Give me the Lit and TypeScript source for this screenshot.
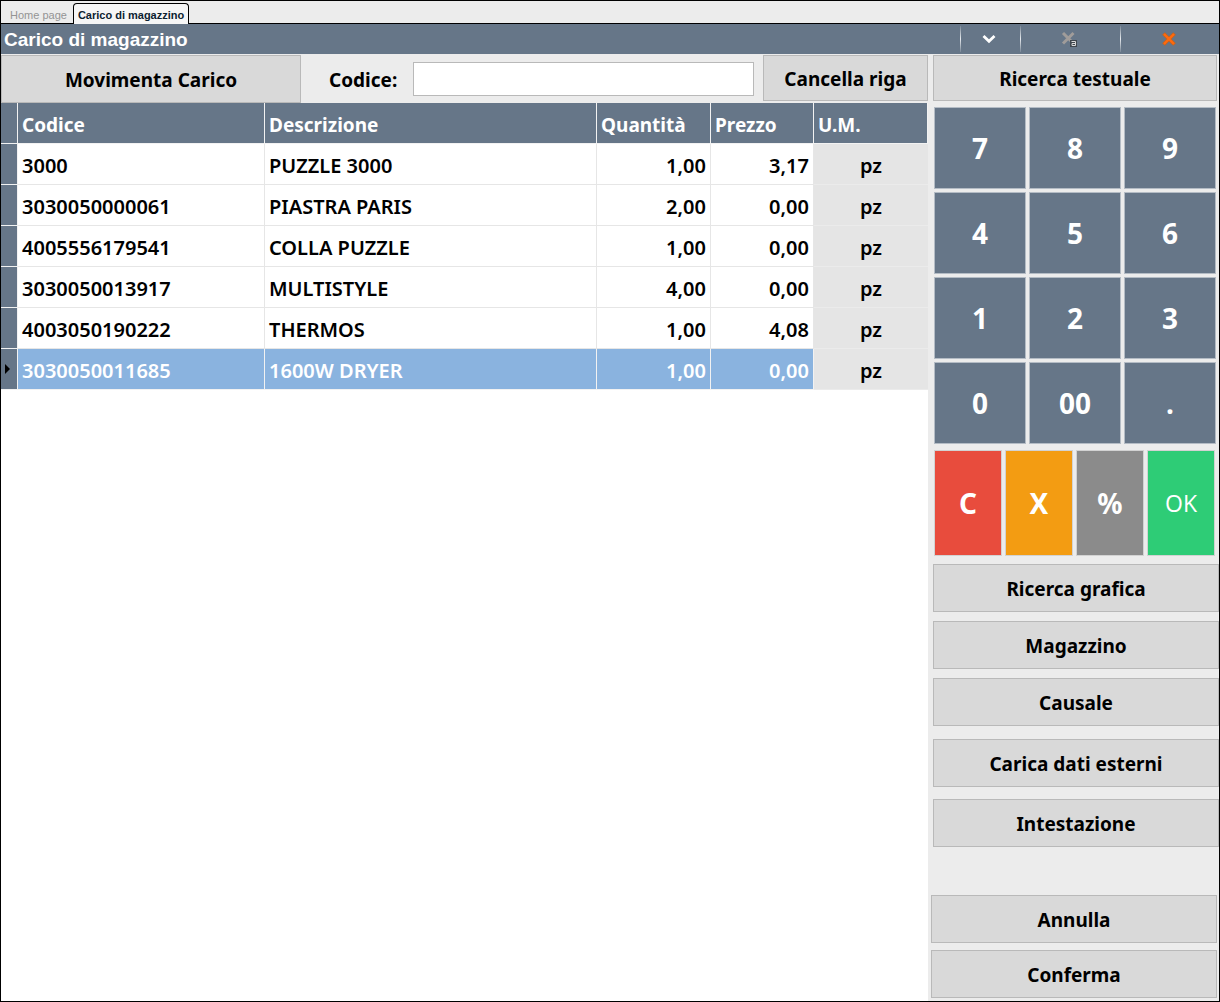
import { LitElement, html, css } from "lit";
import { customElement, state } from "lit/decorators.js";

interface Row { code: string; desc: string; qty: string; price: string; unit: string; }

const ROWS: Row[] = [
  { code: "3000", desc: "PUZZLE 3000", qty: "1,00", price: "3,17", unit: "pz" },
  { code: "3030050000061", desc: "PIASTRA PARIS", qty: "2,00", price: "0,00", unit: "pz" },
  { code: "4005556179541", desc: "COLLA PUZZLE", qty: "1,00", price: "0,00", unit: "pz" },
  { code: "3030050013917", desc: "MULTISTYLE", qty: "4,00", price: "0,00", unit: "pz" },
  { code: "4003050190222", desc: "THERMOS", qty: "1,00", price: "4,08", unit: "pz" },
  { code: "3030050011685", desc: "1600W DRYER", qty: "1,00", price: "0,00", unit: "pz" },
];

const KEYS = ["7", "8", "9", "4", "5", "6", "1", "2", "3", "0", "00", "."];

const MENU_GROUPS = [
  ["Ricerca grafica", "Magazzino", "Causale"],
  ["Carica dati esterni", "Intestazione"],
];

@customElement("app-root")
export class AppRoot extends LitElement {
  static styles = css`
    :host { display: block; --slate: #667688; --line: #e6e6e6; }
    * { box-sizing: border-box; }
    button, input { font: inherit; color: inherit; margin: 0; padding: 0; border-radius: 0; }
    .frame {
      min-height: 100vh; border: 1px solid #000; background: #ececec; color: #000;
      display: flex; flex-direction: column;
      font: 700 19px/24px "Noto Sans", "Open Sans", sans-serif;
    }
    .tabs {
      display: flex; align-items: flex-end; height: 23px; flex: none;
      padding-left: 3px; border-bottom: 1px solid #000;
      font: 12px/18px "Liberation Sans", Arial, sans-serif;
    }
    .tab { height: 20px; border: 1px solid transparent; border-bottom: 0; background: none; color: #949494; padding: 2px 5px 0; font-size: 11px; }
    .tab.active {
      height: 21px; margin-bottom: -1px; border-color: #000; border-radius: 4px 4px 0 0;
      background: #f6f6f6; color: #0c2230; font-weight: 700; padding: 2px 4px 0;
    }
    .titlebar { display: flex; height: 30px; flex: none; background: var(--slate); color: #fff; }
    .title { flex: 1; margin: 0; padding-left: 3px; font: 700 19px/32px "Liberation Sans", Arial, sans-serif; }
    .tool {
      position: relative; width: 100px; border: 0; background: none;
      display: flex; align-items: center; justify-content: center;
    }
    .tool.narrow { width: 60px; }
    .tool::before {
      content: ""; position: absolute; left: 1px; top: 2px; bottom: 2px; width: 1px;
      background: linear-gradient(#7a8897, #e6eaee 50%, #7a8897);
    }
    .body { flex: 1; display: grid; grid-template-columns: minmax(0, 1fr) 291px; }
    .main { display: flex; flex-direction: column; background: #fff; }
    .bar { display: flex; align-items: center; height: 49px; flex: none; background: #ececec; padding-top: 1px; }
    .btn { border: 1px solid #b9b9b9; background: #d9d9d9; text-align: center; height: 48px; flex: none; padding-top: 2px; }
    .move { width: 300px; }
    .cancel { width: 165px; height: 46px; margin: 0 0 2px 9px; }
    .bar label { padding: 2px 16px 0 28px; }
    .bar input { flex: 1; min-width: 0; height: 34px; border: 1px solid #b9b9b9; background: #fff; padding: 0 6px; outline: none; }
    table { width: 100%; border-collapse: separate; border-spacing: 0; table-layout: fixed; }
    .c-mark { width: 17px; } .c-code { width: 247px; } .c-qty { width: 114px; } .c-price { width: 103px; } .c-unit { width: 114px; }
    th, td { height: 41px; padding: 4px 4px 0; text-align: left; border: 0 solid var(--line); border-width: 0 1px 1px 0; white-space: nowrap; overflow: hidden; }
    th { background: var(--slate); color: #fff; border-color: #f2f2f2; }
    td { font-size: 20px; font-weight: 600; }
    td.num { text-align: right; }
    td.unit { text-align: center; background: #e5e5e5; border-color: #ebebeb; border-right-width: 0; }
    tr.sel td:not(.unit) { background: #8ab3df; color: #fff; border-color: #f2f2f2; }
    .mark svg { display: block; }
    th.mark { padding: 0 0 0 4px; }
    .side { display: flex; flex-direction: column; padding: 1px 2px 3px 5px; }
    .side .search { height: 46px; }
    .keys { display: grid; grid-template-columns: repeat(3, 1fr); gap: 3px; padding: 0 1px; margin-top: 6px; }
    .key { height: 82px; border: 1px solid #b4bcc5; background: var(--slate); color: #fff; font-size: 28px; line-height: 36px; }
    .acts { display: grid; grid-template-columns: repeat(4, 1fr); gap: 3px; padding: 0 2px 0 1px; margin: 6px 0 8px; }
    .acts .key { height: 106px; border-color: #d2d2d2; }
    .acts .red { background: #e84c3d; } .acts .orange { background: #f39c12; }
    .acts .grey { background: #8b8b8b; }
    .acts .green { background: #2ecc76; font-size: 23px; font-weight: 400; font-family: "Open Sans", "Noto Sans", sans-serif; }
    .menu { display: flex; flex-direction: column; gap: 13px; margin-right: -2px; }
    .group { display: flex; flex-direction: column; gap: 9px; }
    .group + .group { gap: 12px; }
    .foot { display: flex; flex-direction: column; gap: 7px; margin: auto 0 0 -2px; }
  `;

  @state() private selected = 5;
  @state() private code = "";

  private press(key: string) {
    if (key === "C") this.code = "";
    else if (KEYS.includes(key)) this.code += key;
  }

  render() {
    return html`
      <div class="frame">
        <nav class="tabs">
          <button class="tab">Home page</button>
          <button class="tab active">Carico di magazzino</button>
        </nav>
        <header class="titlebar">
          <h1 class="title">Carico di magazzino</h1>
          <button class="tool narrow" aria-label="Espandi">
            <svg width="14" height="10" viewBox="0 0 14 10"><path d="M1.5 2 L7 7.3 L12.5 2" fill="none" stroke="#fff" stroke-width="2.8"/></svg>
          </button>
          <button class="tool" aria-label="Chiudi altre">
            <svg width="18" height="18" viewBox="0 0 18 18">
              <path d="M3 3 L13.5 13.5 M13.5 3 L3 13.5" stroke="#a09c9a" stroke-width="3"/>
              <path d="M10 10 h7 v7 h-7 z" fill="#3f464d"/>
              <path d="M11.5 11.5 h4 v4 h-3.5 v-2 h3.5" fill="none" stroke="#d8d8d8" stroke-width="1"/>
            </svg>
          </button>
          <button class="tool" aria-label="Chiudi">
            <svg width="16" height="16" viewBox="0 0 16 16">
              <path d="M2.5 2.5 L13.5 13.5 M13.5 2.5 L2.5 13.5" stroke="#c4621f" stroke-width="3.8"/>
              <path d="M3 3 L13 13 M13 3 L3 13" stroke="#ff6a0d" stroke-width="2.4"/>
            </svg>
          </button>
        </header>
        <div class="body">
          <main class="main">
            <div class="bar">
              <button class="btn move">Movimenta Carico</button>
              <label for="code">Codice:</label>
              <input id="code" type="text" .value=${this.code}
                @input=${(e: Event) => (this.code = (e.target as HTMLInputElement).value)} />
              <button class="btn cancel">Cancella riga</button>
            </div>
            <table>
              <colgroup>
                <col class="c-mark" /><col class="c-code" /><col /><col class="c-qty" /><col class="c-price" /><col class="c-unit" />
              </colgroup>
              <thead>
                <tr><th class="mark"></th><th>Codice</th><th>Descrizione</th><th>Quantità</th><th>Prezzo</th><th>U.M.</th></tr>
              </thead>
              <tbody>
                ${ROWS.map((r, i) => html`
                  <tr class=${i === this.selected ? "sel" : ""} @click=${() => (this.selected = i)}>
                    <th class="mark" scope="row">
                      ${i === this.selected
                        ? html`<svg width="6" height="10" viewBox="0 0 6 10"><path d="M0 0 L5 5 L0 10 z" fill="#000"/></svg>`
                        : ""}
                    </th>
                    <td>${r.code}</td><td>${r.desc}</td>
                    <td class="num">${r.qty}</td><td class="num">${r.price}</td><td class="unit">${r.unit}</td>
                  </tr>`)}
              </tbody>
            </table>
          </main>
          <aside class="side">
            <button class="btn search">Ricerca testuale</button>
            <div class="keys">
              ${KEYS.map((k) => html`<button class="key" @click=${() => this.press(k)}>${k}</button>`)}
            </div>
            <div class="acts">
              <button class="key red" @click=${() => this.press("C")}>C</button>
              <button class="key orange">X</button>
              <button class="key grey">%</button>
              <button class="key green">OK</button>
            </div>
            <div class="menu">
              ${MENU_GROUPS.map((group) => html`
                <div class="group">${group.map((t) => html`<button class="btn">${t}</button>`)}</div>`)}
            </div>
            <div class="foot">
              <button class="btn">Annulla</button>
              <button class="btn">Conferma</button>
            </div>
          </aside>
        </div>
      </div>
    `;
  }
}
